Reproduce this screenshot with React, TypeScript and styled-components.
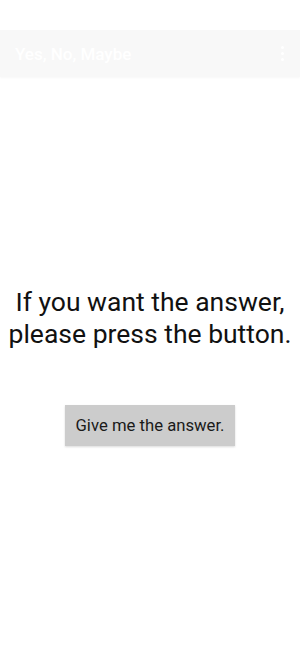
import React from 'react';
import styled, { createGlobalStyle } from 'styled-components';

const GlobalStyle = createGlobalStyle`
  body {
    margin: 0;
    background: #ffffff;
    font-family: Roboto, 'Liberation Sans', sans-serif;
  }
`;

const Screen = styled.div`
  width: 300px;
  height: 650px;
  display: flex;
  flex-direction: column;
  padding-top: 30px;
  box-sizing: border-box;
`;

const AppBar = styled.header`
  height: 47px;
  background: #f8f8f8;
  display: flex;
  align-items: center;
  justify-content: space-between;
  padding: 0 14px 0 15px;
  box-shadow: 0 1px 2px rgba(0, 0, 0, 0.03);
`;

const Title = styled.h1`
  margin: 0;
  color: #ffffff;
  font-size: 17px;
  font-weight: 500;
`;

const MenuButton = styled.div`
  display: flex;
  flex-direction: column;
  gap: 3px;
  padding: 2px 2px;

  span {
    width: 3px;
    height: 3px;
    border-radius: 50%;
    background: #ffffff;
  }
`;

const Content = styled.main`
  flex: 1;
  display: flex;
  flex-direction: column;
  align-items: center;
  padding-top: 209px;
`;

const Prompt = styled.p`
  margin: 0;
  text-align: center;
  font-size: 26.5px;
  line-height: 32px;
  color: #111111;
  white-space: nowrap;
`;

const AnswerButton = styled.button`
  margin-top: 55px;
  width: 170px;
  height: 41px;
  border: none;
  background: #cccccc;
  color: #1a1a1a;
  font-family: Roboto, 'Liberation Sans', sans-serif;
  font-size: 16.7px;
  box-shadow: 0 1px 2px rgba(0, 0, 0, 0.15);
  cursor: pointer;
`;

export default function App() {
  return (
    <>
      <GlobalStyle />
      <Screen>
        <AppBar>
          <Title>Yes, No, Maybe</Title>
          <MenuButton>
            <span />
            <span />
            <span />
          </MenuButton>
        </AppBar>
        <Content>
          <Prompt>
            If you want the answer,
            <br />
            please press the button.
          </Prompt>
          <AnswerButton>Give me the answer.</AnswerButton>
        </Content>
      </Screen>
    </>
  );
}
